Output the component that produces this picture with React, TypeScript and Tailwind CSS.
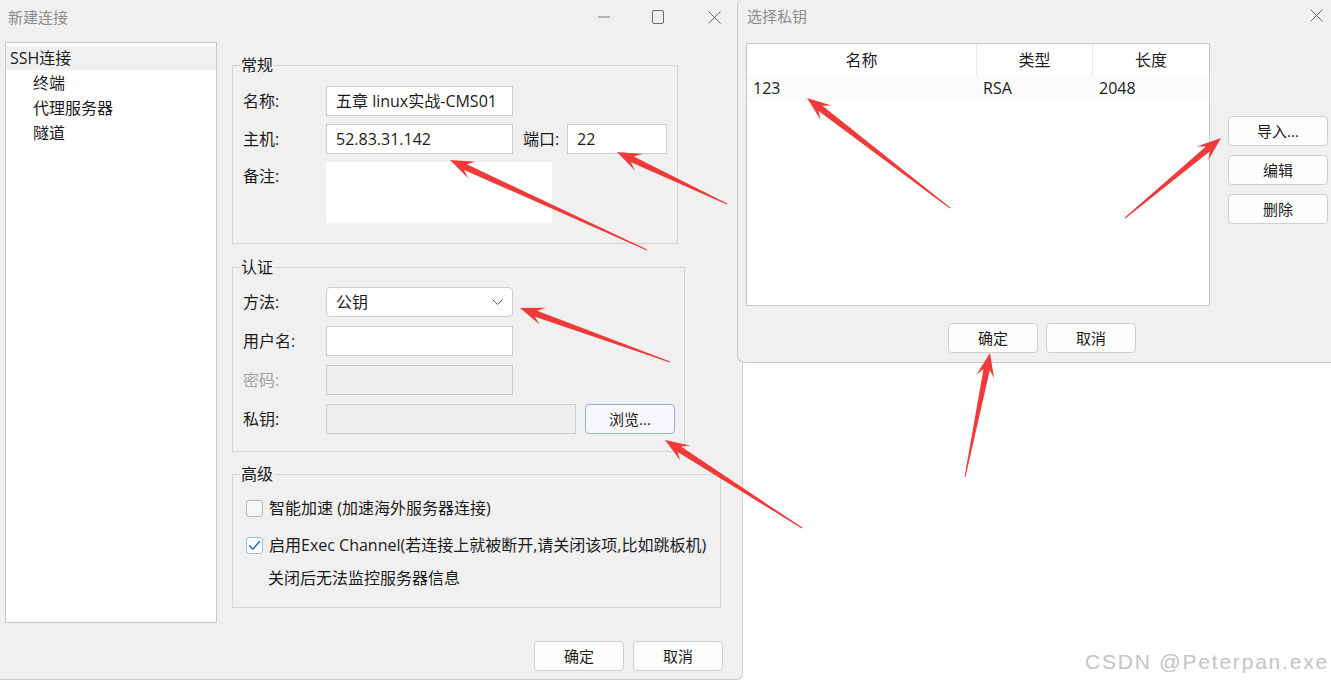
import React from "react";

const F = "font-['Open_Sans','Noto_Sans_CJK_SC',sans-serif]";

function arrowPoints(tx: number, ty: number, hx: number, hy: number) {
  const dx = hx - tx;
  const dy = hy - ty;
  const len = Math.hypot(dx, dy);
  const ux = dx / len;
  const uy = dy / len;
  const px = -uy;
  const py = ux;
  const L = 24;
  const W = 9;
  const N = 3.2;
  const T = 0.5;
  const bx = hx - ux * L;
  const by = hy - uy * L;
  const nx = bx + ux * 7;
  const ny = by + uy * 7;
  const pts: [number, number][] = [
    [tx + px * T, ty + py * T],
    [nx + px * N, ny + py * N],
    [bx + px * W, by + py * W],
    [hx, hy],
    [bx - px * W, by - py * W],
    [nx - px * N, ny - py * N],
    [tx - px * T, ty - py * T],
  ];
  return pts.map((p) => `${p[0].toFixed(1)},${p[1].toFixed(1)}`).join(" ");
}

const arrows: [number, number, number, number][] = [
  [647, 250, 450, 160],
  [727, 204, 617, 152],
  [670, 362, 520, 308],
  [802, 528, 665, 440],
  [950, 208, 807, 98],
  [1125, 218, 1221, 138],
  [965, 477, 990, 353],
];

function Btn({ children, w = "w-[90px]", primary = false }: { children: React.ReactNode; w?: string; primary?: boolean }) {
  return (
    <div
      className={`${w} h-[30px] rounded-[4px] border ${
        primary ? "border-[#93b1d6] bg-[#f6f8fb]" : "border-[#cfcfcf] bg-[#fdfdfd]"
      } flex items-center justify-center text-[15px] leading-none text-[#1b1b1b]`}
    >
      {children}
    </div>
  );
}

function Group({ title, className, children }: { title: string; className: string; children: React.ReactNode }) {
  return (
    <div className={`relative border border-[#d4d4d4] ${className}`}>
      <span className="absolute -top-[11px] left-[7px] px-[1px] bg-[#f0f0f0] text-[16px] leading-[20px] text-[#1b1b1b]">
        {title}
      </span>
      {children}
    </div>
  );
}

function Field({ w, text, disabled = false, extra = "" }: { w: string; text?: string; disabled?: boolean; extra?: string }) {
  return (
    <div
      className={`${w} h-[30px] border ${
        disabled ? "bg-[#efefef] border-[#cccccc]" : "bg-white border-[#cdcdcd]"
      } flex items-center pl-[9px] text-[16px] leading-none text-[#1b1b1b] ${extra}`}
    >
      {text}
    </div>
  );
}

function Label({ children, w = "w-[83px]", gray = false }: { children: React.ReactNode; w?: string; gray?: boolean }) {
  return (
    <div className={`${w} text-[16px] leading-none ${gray ? "text-[#a3a3a3]" : "text-[#1b1b1b]"}`}>{children}</div>
  );
}

function CloseX({ size = 13 }: { size?: number }) {
  return (
    <svg width={size} height={size} viewBox="0 0 13 13">
      <path d="M0.5 0.5 L12.5 12.5 M12.5 0.5 L0.5 12.5" stroke="#6b6b6b" strokeWidth="1" fill="none" />
    </svg>
  );
}

export default function App() {
  return (
    <div className={`relative w-[1331px] h-[685px] bg-white overflow-hidden ${F}`}>
      {/* Left window */}
      <div className="absolute left-0 top-0 w-[743px] h-[680px] bg-[#f0f0f0] border-r border-b border-[#cfcfcf] rounded-br-[6px] flex flex-col">
        <div className="h-[34px] flex items-center pl-[8px]">
          <span className="text-[15px] leading-none text-[#8c8c8c]">新建连接</span>
          <div className="ml-auto flex items-center gap-[10px] pr-[5px]">
            <div className="w-[46px] h-[24px] flex items-center justify-center pl-[4px]">
              <svg width="12" height="2" viewBox="0 0 12 2">
                <path d="M0 1 H12" stroke="#7a7a7a" strokeWidth="1" />
              </svg>
            </div>
            <div className="w-[46px] h-[24px] flex items-center justify-center">
              <svg width="12" height="14" viewBox="0 0 12 14">
                <rect x="0.5" y="0.5" width="11" height="13" rx="1.5" stroke="#6b6b6b" strokeWidth="1" fill="none" />
              </svg>
            </div>
            <div className="w-[46px] h-[24px] flex items-center justify-center">
              <CloseX />
            </div>
          </div>
        </div>

        <div className="flex pt-[8px]">
          {/* tree */}
          <div className="ml-[5px] w-[212px] h-[581px] bg-white border border-[#c8c8c8] pt-[3px] text-[16px] text-[#1b1b1b]">
            <div className="h-[24px] bg-[#f0f0f0] flex items-center pl-[4px] leading-none">SSH连接</div>
            <div className="h-[25px] flex items-center pl-[27px] leading-none">终端</div>
            <div className="h-[25px] flex items-center pl-[27px] leading-none">代理服务器</div>
            <div className="h-[25px] flex items-center pl-[27px] leading-none">隧道</div>
          </div>

          {/* form */}
          <div className="ml-[15px] flex flex-col">
            <Group title="常规" className="mt-[23px] w-[446px] h-[179px] pt-[20px] pl-[10px]">
              <div className="flex flex-col gap-[8px]">
                <div className="flex items-center h-[30px]">
                  <Label>名称:</Label>
                  <Field w="w-[187px]" text="五章 linux实战-CMS01" />
                </div>
                <div className="flex items-center h-[30px]">
                  <Label>主机:</Label>
                  <Field w="w-[187px]" text="52.83.31.142" />
                  <Label w="w-[44px] ml-[10px]">端口:</Label>
                  <Field w="w-[100px]" text="22" />
                </div>
                <div className="flex items-start">
                  <div className="pt-[6px]">
                    <Label>备注:</Label>
                  </div>
                  <div className="w-[226px] h-[61px] bg-white" />
                </div>
              </div>
            </Group>

            <Group title="认证" className="mt-[23px] w-[453px] h-[185px] pt-[19px] pl-[10px]">
              <div className="flex flex-col gap-[9px]">
                <div className="flex items-center h-[30px]">
                  <Label>方法:</Label>
                  <div className="w-[187px] h-[30px] bg-white border border-[#cdcdcd] rounded-[4px] flex items-center pl-[9px] pr-[9px] text-[16px] leading-none text-[#1b1b1b]">
                    <span>公钥</span>
                    <svg className="ml-auto" width="11" height="6" viewBox="0 0 11 6">
                      <path d="M0.5 0.5 L5.5 5.5 L10.5 0.5" stroke="#5a5a5a" strokeWidth="1" fill="none" />
                    </svg>
                  </div>
                </div>
                <div className="flex items-center h-[30px]">
                  <Label>用户名:</Label>
                  <Field w="w-[187px]" />
                </div>
                <div className="flex items-center h-[30px]">
                  <Label gray>密码:</Label>
                  <Field w="w-[187px]" disabled />
                </div>
                <div className="flex items-center h-[30px]">
                  <Label>私钥:</Label>
                  <Field w="w-[250px]" disabled />
                  <div className="ml-[9px]">
                    <Btn primary>浏览...</Btn>
                  </div>
                </div>
              </div>
            </Group>

            <Group title="高级" className="mt-[22px] w-[489px] h-[134px] pt-[21px] pl-[13px]">
              <div className="flex flex-col">
                <div className="flex items-center h-[24px]">
                  <div className="w-[17px] h-[17px] rounded-[3px] border border-[#b5b5b5] bg-[#f7f7f7]" />
                  <span className="ml-[6px] text-[16px] leading-none text-[#1b1b1b]">智能加速 (加速海外服务器连接)</span>
                </div>
                <div className="flex items-center h-[24px] mt-[13px]">
                  <div className="w-[17px] h-[17px] rounded-[3px] border border-[#9fb8d8] bg-white flex items-center justify-center">
                    <svg width="13" height="11" viewBox="0 0 13 11">
                      <path d="M1.2 5.6 L4.8 9.2 L11.8 1.2" stroke="#2f6fd0" strokeWidth="1.6" fill="none" />
                    </svg>
                  </div>
                  <span className="ml-[6px] text-[16px] leading-none text-[#1b1b1b]">
                    启用Exec Channel(若连接上就被断开,请关闭该项,比如跳板机)
                  </span>
                </div>
                <div className="flex items-center h-[24px] mt-[9px] pl-[22px] text-[16px] leading-none text-[#1b1b1b]">
                  关闭后无法监控服务器信息
                </div>
              </div>
            </Group>
          </div>
        </div>

        <div className="flex justify-end gap-[9px] pr-[19px] mt-[18px]">
          <Btn>确定</Btn>
          <Btn>取消</Btn>
        </div>
      </div>

      {/* Right window */}
      <div className="absolute left-[737px] top-0 w-[594px] h-[363px] bg-[#f0f0f0] border-l border-b border-[#c8c8c8] rounded-bl-[8px] rounded-tl-[6px] flex flex-col">
        <div className="h-[33px] flex items-center pl-[9px] pr-[8px]">
          <span className="whitespace-nowrap text-[15px] leading-none text-[#8c8c8c]">选择私钥</span>
          <div className="ml-auto mt-[-2px]">
            <CloseX />
          </div>
        </div>
        <div className="flex pl-[8px] mt-[10px]">
          <div className="w-[464px] h-[263px] bg-white border border-[#c8c8c8] flex flex-col">
            <div className="flex h-[31px] text-[16px] leading-none text-[#1b1b1b]">
              <div className="w-[230px] border-r border-[#e8e8e8] flex items-center justify-center">名称</div>
              <div className="w-[116px] border-r border-[#e8e8e8] flex items-center justify-center">类型</div>
              <div className="w-[116px] flex items-center justify-center">长度</div>
            </div>
            <div className="flex h-[26px] bg-[#fbfbfb] text-[16px] leading-none text-[#1b1b1b]">
              <div className="w-[230px] flex items-center pl-[6px]">123</div>
              <div className="w-[116px] flex items-center pl-[6px]">RSA</div>
              <div className="w-[116px] flex items-center pl-[6px]">2048</div>
            </div>
          </div>
          <div className="ml-[18px] mt-[73px] flex flex-col gap-[9px]">
            <Btn w="w-[100px]">导入...</Btn>
            <Btn w="w-[100px]">编辑</Btn>
            <Btn w="w-[100px]">删除</Btn>
          </div>
        </div>
        <div className="flex gap-[8px] ml-[210px] mt-[17px]">
          <Btn>确定</Btn>
          <Btn>取消</Btn>
        </div>
      </div>

      {/* Annotation arrows */}
      <svg className="absolute left-0 top-0 pointer-events-none" width="1331" height="685" viewBox="0 0 1331 685">
        {arrows.map((a, i) => (
          <polygon key={i} points={arrowPoints(a[0], a[1], a[2], a[3])} fill="#f03a3a" />
        ))}
      </svg>

      {/* Watermark */}
      <div className="absolute left-[1085px] top-[649px] font-['Liberation_Sans',Arial,sans-serif] text-[21px] leading-[26px] tracking-[1.8px] text-[#c4c4c4] [text-shadow:1px_1px_0_#ffffff]">
        CSDN @Peterpan.exe
      </div>
    </div>
  );
}
